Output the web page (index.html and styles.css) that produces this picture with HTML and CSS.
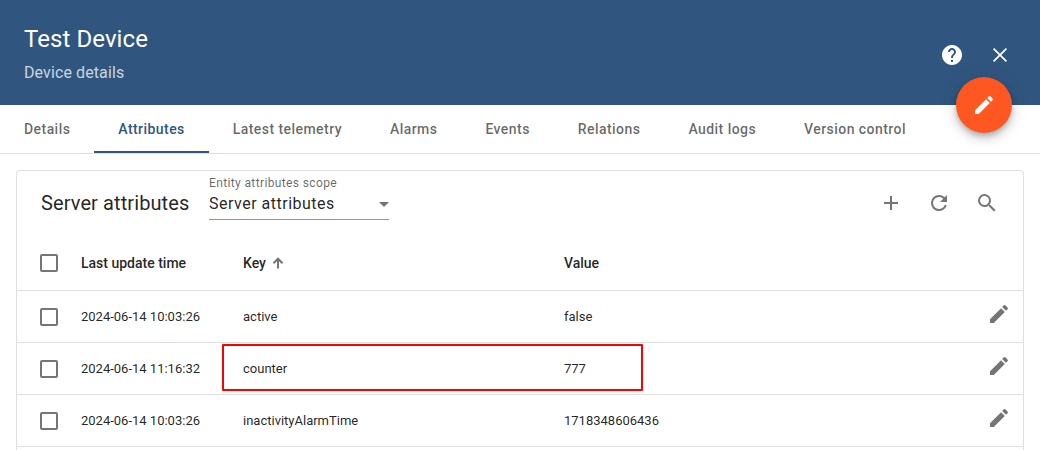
FILE: index.html
```html
<!DOCTYPE html>
<html lang="en">
<head>
<meta charset="utf-8">
<title>Test Device</title>
<link rel="stylesheet" href="styles.css">
</head>
<body>
<header class="header">
  <div class="titles"><h1>Test Device</h1><p>Device details</p></div>
  <div class="header-actions">
    <svg class="icon" viewBox="0 0 24 24"><path d="M12 2C6.48 2 2 6.48 2 12s4.48 10 10 10 10-4.480 10-10S17.520 2 12 2zm1 17h-2v-2h2v2zm2.070-7.750l-.9.920C13.450 12.900 13 13.500 13 15h-2v-.5c0-1.100.450-2.100 1.170-2.830l1.240-1.260c.370-.360.590-.860.590-1.410 0-1.100-.9-2-2-2s-2 .9-2 2H8c0-2.210 1.790-4 4-4s4 1.790 4 4c0 .880-.360 1.680-.930 2.250z"/></svg>
    <svg class="icon close" viewBox="0 0 24 24"><path d="M5.600 5.600l12.800 12.800M18.400 5.600L5.600 18.400"/></svg>
  </div>
  <button class="fab" aria-label="Edit"><svg class="icon" viewBox="0 0 24 24"><path d="M3 17.250V21h3.750L17.810 9.940l-3.750-3.750L3 17.250zM20.710 7.040a1 1 0 0 0 0-1.410l-2.340-2.340a1 1 0 0 0-1.410 0l-1.830 1.830 3.750 3.750 1.830-1.830z"/></svg></button>
</header>
<nav class="tabs">
  <a>Details</a><a class="active">Attributes</a><a>Latest telemetry</a><a>Alarms</a><a>Events</a><a>Relations</a><a>Audit logs</a><a>Version control</a>
</nav>
<main class="card">
  <div class="toolbar">
    <h2>Server attributes</h2>
    <div class="select"><label>Entity attributes scope</label><div class="select-value"><span>Server attributes</span><i class="arrow"></i></div></div>
    <div class="tools">
      <svg class="icon" viewBox="0 0 24 24"><path d="M19 13h-6v6h-2v-6H5v-2h6V5h2v6h6v2z"/></svg>
      <svg class="icon" viewBox="0 0 24 24"><path d="M17.650 6.350A7.960 7.960 0 0 0 12 4a8 8 0 1 0 7.730 10h-2.080A6 6 0 1 1 12 6c1.660 0 3.140.690 4.220 1.780L13 11h7V4l-2.350 2.350z"/></svg>
      <svg class="icon" viewBox="0 0 24 24"><path d="M15.500 14h-.790l-.280-.270A6.470 6.470 0 0 0 16 9.500 6.500 6.500 0 1 0 9.500 16c1.610 0 3.090-.590 4.230-1.570l.270.280v.790l5 4.990L20.490 19l-4.990-5zm-6 0a4.500 4.500 0 1 1 0-9 4.500 4.500 0 0 1 0 9z"/></svg>
    </div>
  </div>
  <div class="row head"><span class="check"></span><span>Last update time</span><span class="key">Key<svg class="sort" viewBox="0 0 12 12"><path d="M6 11.500V1.500M1.500 6.200 6 1.700l4.500 4.500"/></svg></span><span>Value</span></div>
  <div class="row"><span class="check"></span><span>2024-06-14 10:03:26</span><span>active</span><span>false</span><svg class="icon edit" viewBox="0 0 24 24"><path d="M3 17.250V21h3.750L17.810 9.940l-3.750-3.750L3 17.250zM20.710 7.040a1 1 0 0 0 0-1.410l-2.340-2.340a1 1 0 0 0-1.410 0l-1.830 1.830 3.750 3.750 1.830-1.830z"/></svg></div>
  <div class="row"><span class="check"></span><span>2024-06-14 11:16:32</span><span>counter</span><span>777</span><svg class="icon edit" viewBox="0 0 24 24"><path d="M3 17.250V21h3.750L17.810 9.940l-3.750-3.750L3 17.250zM20.710 7.040a1 1 0 0 0 0-1.410l-2.340-2.340a1 1 0 0 0-1.410 0l-1.830 1.830 3.750 3.750 1.830-1.830z"/></svg><div class="highlight"></div></div>
  <div class="row"><span class="check"></span><span>2024-06-14 10:03:26</span><span>inactivityAlarmTime</span><span>1718348606436</span><svg class="icon edit" viewBox="0 0 24 24"><path d="M3 17.250V21h3.750L17.810 9.940l-3.750-3.750L3 17.250zM20.710 7.040a1 1 0 0 0 0-1.410l-2.340-2.340a1 1 0 0 0-1.410 0l-1.830 1.830 3.750 3.750 1.830-1.830z"/></svg></div>
</main>
</body>
</html>
```
FILE: styles.css
```css
* { box-sizing: border-box; }
body { margin: 0; height: 450px; overflow: hidden; background: #fff; font-family: Roboto, sans-serif; color: rgba(0,0,0,.87); }
h1, h2, p { margin: 0; font-weight: 400; }
.icon { display: block; width: 24px; height: 24px; fill: currentColor; flex: none; }
.close { fill: none; stroke: currentColor; stroke-width: 1.7; }
.header { position: relative; height: 105px; background: #305680; color: #fff; display: flex; justify-content: space-between; padding: 23px 28px 0 24px; }
h1 { font-size: 24px; line-height: 32px; letter-spacing: .07px; }
.titles p { font-size: 16px; line-height: 24px; margin-top: 6px; letter-spacing: .1px; color: rgba(255,255,255,.75); }
.header-actions { display: flex; gap: 24px; padding-top: 20px; }
.fab { position: absolute; right: 28px; top: 77px; width: 56px; height: 56px; border: 0; border-radius: 50%; padding: 16px; background: #ff5722; color: #fff; box-shadow: 0 3px 5px -1px rgba(0,0,0,.2), 0 6px 10px rgba(0,0,0,.14), 0 1px 18px rgba(0,0,0,.12); }
.tabs { display: flex; height: 49px; border-bottom: 1px solid #e0e0e0; }
.tabs a { padding: 0 24px; height: 48px; line-height: 48px; font-size: 14px; font-weight: 500; letter-spacing: .443px; color: rgba(0,0,0,.6); white-space: nowrap; }
.tabs .active { color: #305680; border-bottom: 2px solid #305680; }
.card { margin: 16px 16px 0; height: 280px; border: 1px solid #e0e0e0; border-bottom: 0; border-radius: 4px 4px 0 0; }
.toolbar { height: 64px; display: flex; align-items: center; padding: 0 24px; }
h2 { width: 168px; font-size: 20px; letter-spacing: .1px; }
.select { width: 180px; height: 44px; border-bottom: 1px solid #949494; align-self: flex-start; margin-top: 5px; }
.select label { display: block; font-size: 12px; line-height: 14px; letter-spacing: .37px; color: rgba(0,0,0,.6); }
.select-value { display: flex; justify-content: space-between; align-items: center; font-size: 16px; line-height: 28px; letter-spacing: .5px; }
.arrow { border: 5px solid transparent; border-top-color: #757575; border-bottom: 0; }
.tools { display: flex; gap: 24px; margin-left: auto; color: #757575; }
.row { position: relative; display: grid; grid-template-columns: 40px 162px 321px 1fr 24px; align-items: center; height: 52px; padding: 0 12px 0 24px; border-bottom: 1px solid #e0e0e0; font-size: 13px; }
.head { height: 56px; font-size: 14px; font-weight: 500; }
.check { width: 18px; height: 18px; border: 2px solid #757575; border-radius: 2px; margin-left: -1px; }
.key { display: flex; align-items: center; gap: 6px; }
.sort { width: 12px; height: 12px; fill: none; stroke: #757575; stroke-width: 2; }
.edit { color: #757575; margin-top: -5px; }
.highlight { position: absolute; left: 205px; top: 1px; width: 421px; height: 47px; border: 2px solid #f00; border-radius: 1px; }
```
